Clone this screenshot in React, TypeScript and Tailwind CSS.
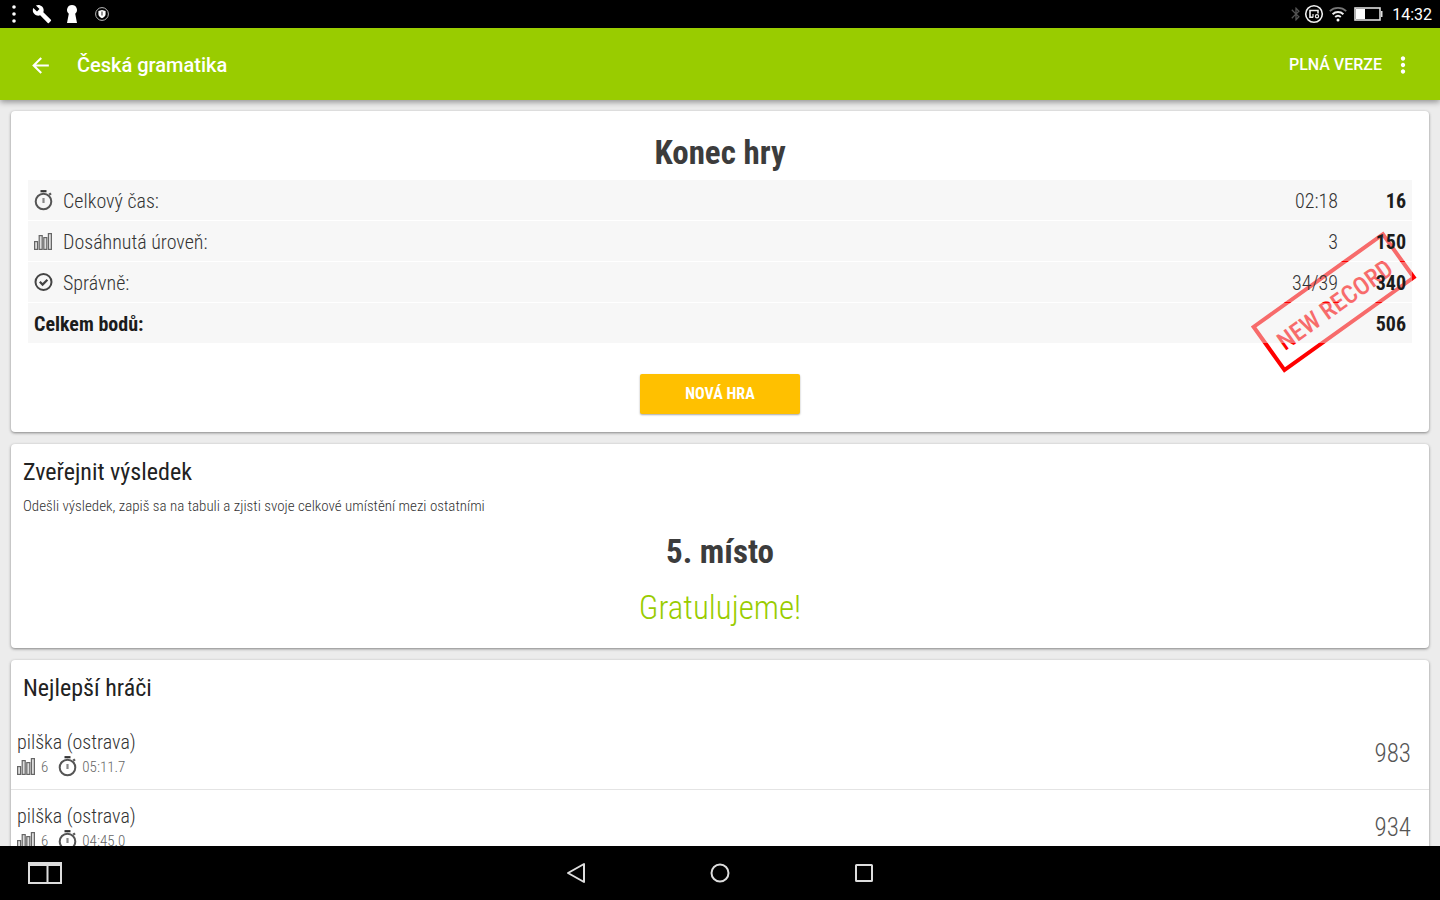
import { MdArrowBack, MdBluetooth, MdBuild, MdMoreVert } from "react-icons/md";

type Stat = {
  label: string;
  value: string;
  points: number;
  icon: React.ReactNode;
};

type Player = {
  name: string;
  level: number;
  time: string;
  score: number;
};

const StopwatchIcon = () => (
  <svg width="20" height="22" viewBox="0 0 20 22" fill="none" className="shrink-0">
    <circle cx="9.5" cy="11.5" r="7.8" stroke="#555" strokeWidth="2" />
    <path d="M6.500 1.200h6" stroke="#333" strokeWidth="2.200" />
    <path d="M9.500 8v5" stroke="#888" strokeWidth="2.200" />
    <path d="M15.200 4.700l1.800-1.400" stroke="#555" strokeWidth="2.200" />
  </svg>
);

const LevelIcon = () => (
  <svg width="20" height="20" viewBox="0 0 20 20" fill="#ddd" stroke="#666" strokeWidth="1.200" className="shrink-0">
    <rect x="0.600" y="9.600" width="3" height="7.800" />
    <rect x="5.200" y="3.600" width="3" height="13.800" />
    <rect x="9.800" y="5.600" width="3" height="11.800" />
    <rect x="14.400" y="1.600" width="3" height="15.800" />
  </svg>
);

const CheckIcon = () => (
  <svg width="20" height="20" viewBox="0 0 20 20" fill="none" stroke="#444" className="shrink-0">
    <circle cx="9.5" cy="9" r="8" strokeWidth="2" />
    <path d="M5.800 8.800l2.800 2.800 4.800-4.800" strokeWidth="2.200" />
  </svg>
);

const stats: Stat[] = [
  { label: "Celkový čas:", value: "02:18", points: 16, icon: <StopwatchIcon /> },
  { label: "Dosáhnutá úroveň:", value: "3", points: 150, icon: <LevelIcon /> },
  { label: "Správně:", value: "34/39", points: 340, icon: <CheckIcon /> },
];

const players: Player[] = [
  { name: "pilška (ostrava)", level: 6, time: "05:11.7", score: 983 },
  { name: "pilška (ostrava)", level: 6, time: "04:45.0", score: 934 },
];

const StatusBar = () => (
  <div className="flex h-7 shrink-0 items-center justify-between bg-black px-2 text-white">
    <div className="flex items-center">
      <svg width="12" height="20" viewBox="0 0 12 20" fill="#fff">
        <circle cx="6" cy="3" r="1.800" />
        <circle cx="6" cy="10" r="1.800" />
        <circle cx="6" cy="17" r="1.800" />
      </svg>
      <MdBuild size={20} className="ml-3" />
      <svg width="12" height="20" viewBox="0 0 12 20" fill="#fff" className="ml-3.5">
        <path d="M6 1a5 5 0 0 1 3.200 8.800L11 19H1l1.800-9.200A5 5 0 0 1 6 1z" />
      </svg>
      <svg width="16" height="16" viewBox="0 0 16 16" fill="none" className="ml-4">
        <circle cx="8" cy="8" r="6.400" stroke="#bbb" />
        <path d="M4.400 5L8 4l3.600 1v3c0 2-1.600 3.400-3.600 4.200C6 11.400 4.400 10 4.400 8z" fill="#fff" />
        <path d="M8 5.600v4" stroke="#666" strokeWidth="1.400" />
      </svg>
    </div>
    <div className="flex items-center">
      <MdBluetooth size={16} className="text-neutral-600" />
      <svg width="20" height="20" viewBox="0 0 20 20" fill="none" stroke="#eee">
        <circle cx="10" cy="10" r="8.300" strokeWidth="1.600" />
        <path d="M9 13.200H6V6.500h8v3" strokeWidth="1.600" />
        <path d="M9 13.500V10" strokeWidth="1.200" />
        <circle cx="13" cy="12.300" r="1.600" strokeWidth="1.200" />
      </svg>
      <svg width="20" height="16" viewBox="0 0 20 16" fill="none" className="ml-1">
        <path d="M1.800 5.200a12 12 0 0 1 16.400 0" stroke="#777" strokeWidth="1.800" />
        <path d="M4.600 8.200a8 8 0 0 1 10.800 0" stroke="#eee" strokeWidth="2" />
        <path d="M7.200 11a4.200 4.200 0 0 1 5.600 0" stroke="#eee" strokeWidth="2" />
        <circle cx="10" cy="14" r="1.500" fill="#fff" />
      </svg>
      <svg width="32" height="16" viewBox="0 0 32 16" className="ml-1">
        <rect x="3" y="2" width="25" height="12" fill="none" stroke="#ddd" strokeWidth="1.600" />
        <rect x="4" y="3" width="9" height="10" fill="#fff" />
        <rect x="29" y="5" width="1.500" height="6" fill="#ddd" />
      </svg>
      <span className="ml-2 pt-0.5 text-base">14:32</span>
    </div>
  </div>
);

const Header = () => (
  <header className="relative z-10 flex h-18 shrink-0 items-center bg-[#99cc00] pt-0.5 pr-6 pl-7 text-white shadow-[0_2px_6px_rgba(0,0,0,0.4)]">
    <button type="button" aria-label="Zpět">
      <MdArrowBack size={25} />
    </button>
    <h1 className="ml-6 text-xl font-medium">Česká gramatika</h1>
    <button type="button" className="ml-auto text-base font-medium">
      PLNÁ VERZE
    </button>
    <button type="button" aria-label="Menu" className="ml-2">
      <MdMoreVert size={26} />
    </button>
  </header>
);

const Stamp = () => (
  <svg width="168" height="144" viewBox="0 0 168 144" className="absolute top-30 right-3 -z-10">
    <g transform="translate(0 -1) rotate(-35.600 84 72)">
      <rect x="5" y="46" width="159" height="53" fill="none" stroke="#f00" strokeWidth="4" />
      <text x="84" y="84" textAnchor="middle" fontSize="25" fontWeight="500" fill="#f00">
        NEW RECORD
      </text>
    </g>
  </svg>
);

const Card = ({ children, className = "" }: { children: React.ReactNode; className?: string }) => (
  <section
    className={`relative isolate shrink-0 rounded bg-white shadow-[0_1px_3px_rgba(0,0,0,0.45)] ${className}`}
  >
    {children}
  </section>
);

const ResultCard = () => (
  <Card className="px-[17px] pt-5 pb-[18px]">
    <Stamp />
    <h2 className="mb-1 text-center text-[33px] leading-11 font-bold text-[#3c3c3c]">Konec hry</h2>
    <table className="w-full border-separate border-spacing-x-0 border-spacing-y-px text-xl leading-6 font-light text-[#333]">
      <tbody>
        {stats.map((stat) => (
          <tr key={stat.label} className="h-10 bg-[#eeeeee]/45">
            <th scope="row" className="pt-0.5 pl-1.5 text-left font-light">
              <span className="flex items-center gap-[9px]">
                {stat.icon}
                {stat.label}
              </span>
            </th>
            <td className="pt-0.5 text-right">{stat.value}</td>
            <td className="w-[74px] pt-0.5 pr-1.5 text-right font-bold text-[#1c1c1c]">{stat.points}</td>
          </tr>
        ))}
        <tr className="h-10 bg-[#eeeeee]/45 font-bold text-[#1c1c1c]">
          <th scope="row" colSpan={2} className="pt-0.5 pl-1.5 text-left">
            Celkem bodů:
          </th>
          <td className="pt-0.5 pr-1.5 text-right">506</td>
        </tr>
      </tbody>
    </table>
    <button
      type="button"
      className="mx-auto mt-[30px] block h-10 w-40 rounded-xs bg-[#ffc000] text-base font-bold text-white shadow-[0_1px_2px_rgba(0,0,0,0.35)]"
    >
      NOVÁ HRA
    </button>
  </Card>
);

const PublishCard = () => (
  <Card className="px-3 pt-3 pb-4">
    <h2 className="text-2xl leading-8 text-[#222]">Zveřejnit výsledek</h2>
    <p className="mt-2 text-[15px] leading-5 font-light text-[#333]">
      Odešli výsledek, zapiš sa na tabuli a zjisti svoje celkové umístění mezi ostatními
    </p>
    <p className="mt-3 text-center text-[33px] leading-12 font-bold text-[#3c3c3c]">5. místo</p>
    <p className="mt-2 text-center text-[33px] leading-12 font-light text-[#99cc00]">Gratulujeme!</p>
  </Card>
);

const PlayersCard = () => (
  <Card className="pt-3">
    <h2 className="px-3 text-2xl leading-8 text-[#222]">Nejlepší hráči</h2>
    <ul className="mt-3">
      {players.map((player) => (
        <li
          key={player.time}
          className="flex items-center justify-between border-b border-[#e4e4e4] pt-3 pr-[18px] pb-[11px] pl-1.5 font-light"
        >
          <div>
            <p className="text-xl leading-7 text-[#333]">{player.name}</p>
            <div className="flex h-[22px] items-center text-[15px] leading-5 text-[#666]">
              <LevelIcon />
              <span className="ml-1">{player.level}</span>
              <span className="mr-1 ml-2.5">
                <StopwatchIcon />
              </span>
              <span>{player.time}</span>
            </div>
          </div>
          <span className="pt-0.5 text-[25px] text-[#555]">{player.score}</span>
        </li>
      ))}
    </ul>
  </Card>
);

const NavigationBar = () => (
  <nav className="relative flex h-[54px] shrink-0 items-center justify-center gap-30 bg-black text-[#ddd]">
    <button type="button" aria-label="Rozdělit obrazovku" className="absolute left-7">
      <svg width="36" height="22" viewBox="0 0 36 22" fill="none" stroke="currentColor" strokeWidth="2">
        <path d="M1 1h32v20H1zM19.500 2v19" />
        <path d="M0 2h34" strokeWidth="4" />
      </svg>
    </button>
    <button type="button" aria-label="Zpět">
      <svg width="24" height="24" viewBox="0 0 24 24" fill="none" stroke="currentColor" strokeWidth="2">
        <path d="M20 3v18L4 12z" strokeLinejoin="round" />
      </svg>
    </button>
    <button type="button" aria-label="Domů">
      <svg width="24" height="24" viewBox="0 0 24 24" fill="none" stroke="currentColor" strokeWidth="2">
        <circle cx="12" cy="12" r="8.500" />
      </svg>
    </button>
    <button type="button" aria-label="Poslední aplikace">
      <svg width="24" height="24" viewBox="0 0 24 24" fill="none" stroke="currentColor" strokeWidth="2">
        <rect x="4" y="4" width="16" height="16" rx="0.500" />
      </svg>
    </button>
  </nav>
);

export default function App() {
  return (
    <div className="flex h-screen flex-col bg-[#ececec] font-['Roboto',sans-serif]">
      <StatusBar />
      <Header />
      <main className="flex min-h-0 flex-1 flex-col gap-3 overflow-hidden px-[11px] pt-[11px] font-['Roboto_Condensed','Liberation_Sans_Narrow','Roboto',sans-serif]">
        <ResultCard />
        <PublishCard />
        <PlayersCard />
      </main>
      <NavigationBar />
    </div>
  );
}
